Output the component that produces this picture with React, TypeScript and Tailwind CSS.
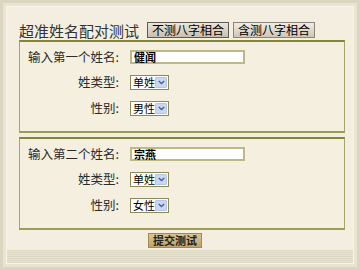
const FONT = { fontFamily: '"Noto Sans CJK SC", "Noto Sans", sans-serif' };

function Select({ value }: { value: string }) {
  return (
    <div className="flex h-[15px] w-[39px] items-center justify-between border border-[#8d8a55] bg-white pl-[2px] pr-[1px]">
      <span className="whitespace-nowrap text-[11px] leading-none text-black">{value}</span>
      <span className="flex h-[11px] w-[12px] shrink-0 items-center justify-center rounded-[1px] border border-[#b5c5e6] bg-[#c9d7f3]">
        <svg width="7" height="5" viewBox="0 0 7 5">
          <path d="M0.8 1 L3.5 3.6 L6.2 1" fill="none" stroke="#4a5f8c" strokeWidth="1.4" />
        </svg>
      </span>
    </div>
  );
}

function Row({ label, children }: { label: string; children: React.ReactNode }) {
  return (
    <div className="flex items-center">
      <span className="w-[99px] whitespace-nowrap text-right text-[12.5px] leading-none text-[#2b2b2b]">{label}</span>
      <div className="ml-[11px]">{children}</div>
    </div>
  );
}

function Section({ first, second, sex }: { first: string; second: string; sex: string }) {
  return (
    <div className="flex h-[93px] flex-col gap-[11px] border-x border-t-2 border-b-2 border-x-[#a6a464] border-t-[#86843a] border-b-[#9d9b56] bg-[#f4efdf] pt-[8px]">
      <Row label={first}>
        <div className="flex h-[14px] w-[115px] items-center border-2 border-[#bdb986] bg-white pl-[2px] text-[11px] font-bold leading-none text-black">
          {second}
        </div>
      </Row>
      <Row label="姓类型:">
        <Select value="单姓" />
      </Row>
      <Row label="性别:">
        <Select value={sex} />
      </Row>
    </div>
  );
}

export default function App() {
  return (
    <div className="h-[270px] w-[360px] overflow-hidden bg-[#dad5c1] p-[3px]" style={FONT}>
      <div className="h-full bg-[#e8e4d2] p-[3px]">
        <div className="flex h-full flex-col border border-[#f7f4e9] bg-[#f3eedf]">
          <div className="flex flex-col pl-[12px] pr-[8px] pt-[15px]">
            <div className="flex h-[16px] items-center gap-[4px]">
              <span className="text-[15px] leading-none text-[#333]">超准姓名配对测试</span>
              <button className="ml-[4px] flex h-[16px] w-[82px] items-center justify-center border border-[#5e5a50] bg-gradient-to-b from-[#ebe5da] to-[#c9bfb1] text-[12px] leading-none text-black">
                不测八字相合
              </button>
              <button className="flex h-[16px] w-[82px] items-center justify-center border border-[#8a857a] bg-gradient-to-b from-[#f1ece2] to-[#cfc6b9] text-[12px] leading-none text-black">
                含测八字相合
              </button>
            </div>
            <div className="mt-[2px] flex flex-col gap-[4px]">
              <Section first="输入第一个姓名:" second="健闻" sex="男性" />
              <Section first="输入第二个姓名:" second="宗燕" sex="女性" />
            </div>
            <div className="mt-[3px] flex justify-center pr-[14px]">
              <button className="flex h-[15px] w-[54px] items-center justify-center border border-[#a08c4e] bg-gradient-to-b from-[#d9c592] to-[#bea469] text-[11px] font-bold leading-none text-[#222]">
                提交测试
              </button>
            </div>
          </div>
          <div className="mt-[2px] flex-1 bg-[repeating-linear-gradient(0deg,#ddd8c4_0px,#ddd8c4_1px,#e8e3d1_1px,#e8e3d1_2px)]" />
        </div>
      </div>
    </div>
  );
}
